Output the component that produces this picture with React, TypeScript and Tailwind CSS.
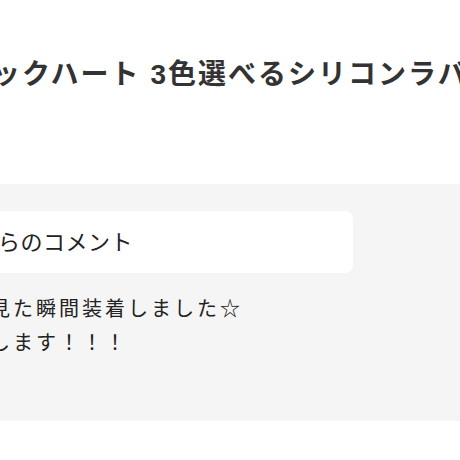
export default function App() {
  return (
    <div className="w-[460px] h-[460px] overflow-hidden bg-white text-[#333] font-['Liberation_Sans','Noto_Sans_CJK_JP',sans-serif]">
      <div className="h-[184px] pt-[55px]">
        <h1 className="ml-[-68px] whitespace-nowrap text-[28px] font-bold leading-[40px] tracking-[2px]">
          ブラックハート 3色選べるシリコンラバーブレスレット
        </h1>
      </div>
      <div className="h-[237px] bg-[#f5f5f5] pt-[27px]">
        <div className="ml-[-112px] flex h-[62px] w-[465px] items-center rounded-lg bg-white pl-5 text-[22px] whitespace-nowrap text-[#222] tracking-[0.5px]">
          お客様からのコメント
        </div>
        <p className="ml-[-79px] mt-[19px] whitespace-nowrap text-[20px] leading-[34px] tracking-[3px] text-[#222]">
          商品を見た瞬間装着しました☆
          <br />
          大切にします！！！
        </p>
      </div>
    </div>
  );
}
